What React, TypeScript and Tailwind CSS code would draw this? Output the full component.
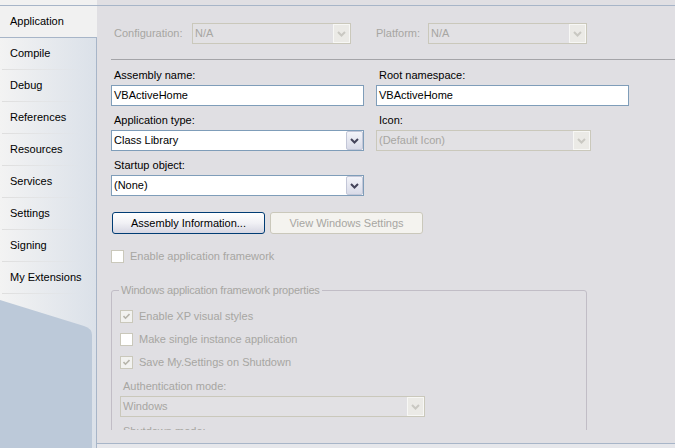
import React from 'react';

const tabs = ['Compile', 'Debug', 'References', 'Resources', 'Services', 'Settings', 'Signing', 'My Extensions'];

const Chevron = ({ disabled }: { disabled?: boolean }) => (
  <svg width="9" height="6" viewBox="0 0 9 6" className="block">
    <path d="M1 1L4.5 4.5L8 1" fill="none" stroke={disabled ? '#c9c8c2' : '#44445a'} strokeWidth="2" />
  </svg>
);

interface ComboProps {
  value: string;
  className: string;
  disabled?: boolean;
}

const ComboBox: React.FC<ComboProps> = ({ value, className, disabled }) => (
  <div
    className={`flex h-[21px] shrink-0 border ${disabled ? 'border-[#cac8bb] bg-[#e2e1e4] text-[#a7a6a2]' : 'border-[#7f9db9] bg-white'} ${className}`}
  >
    <div className="flex-1 flex items-center pl-[2px] truncate">{value}</div>
    {disabled ? (
      <div className="w-[17px] flex items-center justify-center border border-[#f7f7f5] bg-[#ebeae6]">
        <Chevron disabled />
      </div>
    ) : (
      <div className="w-[17px] flex items-center justify-center rounded-[2px] border border-[#c3c7d8] bg-linear-to-b from-[#f3f4f9] to-[#d9dbe8]">
        <Chevron />
      </div>
    )}
  </div>
);

const TextBox = ({ value }: { value: string }) => (
  <div className="flex items-center h-[21px] w-[253px] border border-[#7f9db9] bg-white pl-[2px]">{value}</div>
);

const Label = ({ text, disabled }: { text: string; disabled?: boolean }) => (
  <div className={`h-[13px] pl-[3px] whitespace-nowrap ${disabled ? 'text-[#a7a6a2]' : ''}`}>{text}</div>
);

const CheckBox = ({ checked, label }: { checked?: boolean; label: string }) => (
  <div className="flex items-center h-[13px] gap-[6px] text-[#a7a6a2]">
    <div className={`w-[13px] h-[13px] border border-[#cac8bb] flex items-center justify-center ${checked ? 'bg-[#f2f2f0]' : 'bg-white'}`}>
      {checked && (
        <svg width="7" height="7" viewBox="0 0 7 7" className="block">
          <path d="M0.5 3L2.5 5.2L6.5 1" fill="none" stroke="#b6b4aa" strokeWidth="1.6" />
        </svg>
      )}
    </div>
    <span className="whitespace-nowrap">{label}</span>
  </div>
);

export default function App() {
  return (
    <div className="flex w-[675px] h-[448px] overflow-hidden bg-[#e0dfe3] font-['Liberation_Sans',Arial,sans-serif] text-[11px] leading-[13px] text-black">
      {/* property page tabs */}
      <div className="flex flex-col w-[97px] shrink-0">
        <div className="h-[6px] shrink-0 border-b border-[#a7b5c8] bg-[#f1f1f1]" />
        <div className="h-[32px] shrink-0 flex items-center pl-[10px] border-b border-[#a7b5c8] bg-[#f1f1f1]">Application</div>
        <div className="flex-1 flex flex-col border-r border-[#a7b5c8] bg-linear-to-r from-[#f3f3f3] to-[#dbe1e9]">
          {tabs.map((t) => (
            <div key={t} className="h-[32px] shrink-0 flex flex-col">
              <div className="flex-1 flex items-center pl-[10px]">{t}</div>
              <div className="h-px ml-[2px] w-[80px] bg-linear-to-r from-[#dedede] to-transparent" />
            </div>
          ))}
          <div className="flex-1">
            <svg width="96" height="154" viewBox="0 0 96 154" className="block">
              <path d="M0 6L84 32Q92 34.5 92 41V154H0Z" fill="#bcc9d9" />
            </svg>
          </div>
        </div>
      </div>

      {/* page content */}
      <div className="flex-1 flex flex-col min-w-0">
        <div className="h-[6px] shrink-0 border-b border-[#a7b5c8]" />
        <div className="h-[424px] shrink-0 overflow-hidden pl-[14px] pt-[17px]">
          <div className="flex items-center h-[21px]">
            <div className="w-[81px]"><Label text="Configuration:" disabled /></div>
            <ComboBox value="N/A" className="w-[159px]" disabled />
            <div className="w-[55px] ml-[22px]"><Label text="Platform:" disabled /></div>
            <ComboBox value="N/A" className="w-[159px]" disabled />
          </div>

          <div className="h-px mt-[15px] bg-[#a4a4a8]" />

          <div className="flex gap-[12px] mt-[9px]">
            <div className="flex flex-col gap-[3px] w-[253px]">
              <Label text="Assembly name:" />
              <TextBox value="VBActiveHome" />
            </div>
            <div className="flex flex-col gap-[3px] w-[253px]">
              <Label text="Root namespace:" />
              <TextBox value="VBActiveHome" />
            </div>
          </div>

          <div className="flex gap-[12px] mt-[8px]">
            <div className="flex flex-col gap-[3px] w-[253px]">
              <Label text="Application type:" />
              <ComboBox value="Class Library" className="w-[253px]" />
            </div>
            <div className="flex flex-col gap-[3px] w-[253px]">
              <Label text="Icon:" />
              <ComboBox value="(Default Icon)" className="w-[215px]" disabled />
            </div>
          </div>

          <div className="flex flex-col gap-[3px] w-[253px] mt-[8px]">
            <Label text="Startup object:" />
            <ComboBox value="(None)" className="w-[253px]" />
          </div>

          <div className="flex gap-[5px] mt-[16px] pl-[1px]">
            <button className="h-[22px] w-[153px] rounded-[3px] border border-[#003c74] bg-linear-to-b from-[#ffffff] via-[#f1f1f5] to-[#d6d6e2] text-black">
              Assembly Information...
            </button>
            <button className="h-[22px] w-[153px] rounded-[3px] border border-[#cac8bb] bg-[#f4f3ef] text-[#a7a6a2]">
              View Windows Settings
            </button>
          </div>

          <div className="mt-[16px]">
            <CheckBox label="Enable application framework" />
          </div>

          <fieldset className="mt-[21px] w-[476px] h-[300px] border border-[#c1bdc6] rounded-[3px]">
            <legend className="ml-[7px] px-[2px] h-[13px] tracking-[-0.2px] text-[#a7a6a2]">Windows application framework properties</legend>
            <div className="flex flex-col gap-[10px] mt-[13px] pl-[8px]">
              <CheckBox checked label="Enable XP visual styles" />
              <CheckBox label="Make single instance application" />
              <CheckBox checked label="Save My.Settings on Shutdown" />
            </div>
            <div className="mt-[11px] pl-[8px]">
              <Label text="Authentication mode:" disabled />
            </div>
            <div className="pl-[8px]">
              <ComboBox value="Windows" className="w-[305px] mt-[3px]" disabled />
            </div>
            <div className="mt-[8px] pl-[8px]">
              <Label text="Shutdown mode:" disabled />
            </div>
          </fieldset>
        </div>
        <div className="h-[14px] shrink-0 border-b border-[#a7b5c8]" />
        <div className="flex-1 bg-[#e6e7eb]" />
      </div>
    </div>
  );
}
